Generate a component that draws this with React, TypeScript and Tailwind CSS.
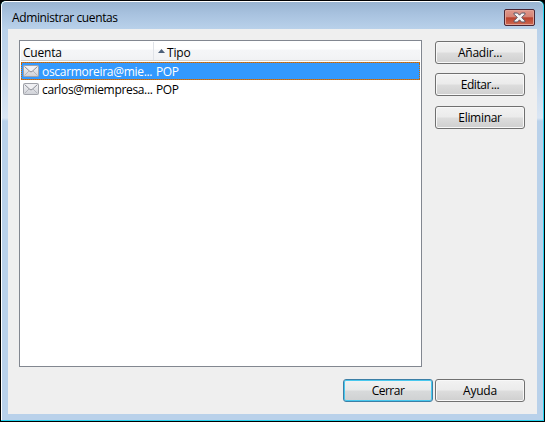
import React from 'react';

function Mail() {
  return (
    <svg width="16" height="12" viewBox="0 0 16 12" className="block shrink-0">
      <defs>
        <linearGradient id="paper" x1="0" y1="0" x2="0" y2="1">
          <stop offset="0" stopColor="#f4f4f6" />
          <stop offset="1" stopColor="#cfd1d7" />
        </linearGradient>
      </defs>
      <rect x=".5" y=".5" width="15" height="11" rx="1" fill="url(#paper)" stroke="#a0a2a9" />
      <path d="M1.5 10.5L6 6M14.5 10.5L10 6" fill="none" stroke="#b4b6bd" />
      <path d="M1.5 1.5L7 6.5Q8 7.3 9 6.5L14.5 1.5" fill="#f0f0f3" stroke="#8b8d95" />
    </svg>
  );
}

function Button({ label, primary = false, tracking }: { label: string; primary?: boolean; tracking: string }) {
  return (
    <button
      className={`block h-[23px] w-[90px] rounded-[3px] border text-center leading-[21px] ${tracking} ${
        primary
          ? 'border-[#3c7fa6] bg-[linear-gradient(#f1f2f2_0%,#e8eaea_48%,#d8dadb_52%,#cfd1d2_100%)] shadow-[inset_0_0_0_1px_#48c8ee]'
          : 'border-[#707070] bg-[linear-gradient(#f2f2f2_0%,#ebebeb_48%,#dddddd_52%,#cfcfcf_100%)] shadow-[inset_0_0_0_1px_#f8f8f8]'
      }`}
    >
      {label}
    </button>
  );
}

const focusLine = 'h-px bg-[repeating-linear-gradient(90deg,#cc6600_0px,#cc6600_1px,#a87c50_1px,#a87c50_2px)]';

function Row({ account, selected = false, tracking }: { account: string; selected?: boolean; tracking: string }) {
  return (
    <div className={`flex h-[18px] flex-col ${selected ? 'bg-[#3399ff] text-white' : ''}`}>
      <div className={selected ? focusLine : 'h-px'} />
      <div
        className={`flex h-[16px] items-center border-x border-dotted leading-[16px] ${
          selected ? 'border-[#cc6600]' : 'border-transparent'
        }`}
      >
        <div className="flex w-[134px] shrink-0 items-center pl-px">
          <Mail />
          <span className={`ml-[3px] whitespace-nowrap pt-[2px] ${tracking}`}>{account}</span>
        </div>
        <span className="pt-[2px] tracking-[-0.4px]">POP</span>
      </div>
      <div className={selected ? focusLine : 'h-px'} />
    </div>
  );
}

export default function App() {
  return (
    <div className="h-[422px] w-[545px] overflow-hidden bg-black font-['Open_Sans','Noto_Sans',sans-serif] text-[12px] text-black">
      <div className="h-full rounded-t-[6px] border border-black bg-[#27d3ef]">
        <div className="mr-px h-[419px] rounded-t-[5px] border-l border-t border-white bg-[linear-gradient(#99b4d1_0px,#a8c2df_12px,#b9d1ea_27px,#c3d7ec_65px,#dae6f4_116px,#b9d1ea_119px,#b9d1ea_100%)] px-[6px]">
          <header className="flex h-[27px] items-start justify-between pl-[4px] pr-[2px]">
            <h1 className="mt-[8px] text-[12px] leading-[16px] tracking-[-0.38px]">Administrar cuentas</h1>
            <button className="mt-[7px] flex h-[17px] w-[31px] items-center justify-center rounded-[2px] border border-[#4b2634] bg-[linear-gradient(#e0978b_0%,#d58476_46%,#b9412d_52%,#cf6a53_100%)] shadow-[inset_0_0_0_1px_#e1a397]">
              <svg width="13" height="11" viewBox="0 0 13 11">
                <path d="M1 1H4.5L6.5 3.2L8.5 1H12V2.2L8.7 5.5L12 8.8V10H8.5L6.5 7.8L4.5 10H1V8.8L4.3 5.5L1 2.2Z" fill="#f5f5f5" stroke="#5d5665" />
              </svg>
            </button>
          </header>
          <main className="h-[385px] w-[529px] bg-[#efefef] pl-[11px] pt-[11px]">
            <div className="flex">
              <section className="h-[327px] w-[403px] border border-[#828790] bg-white p-px">
                <div className="flex h-[19px] w-[399px] border-b border-[#d5d5d5] bg-[linear-gradient(#ffffff_0%,#ffffff_40%,#f5f6f8_44%,#f1f2f4_100%)] leading-[22px]">
                  <div className="w-[133px] border-r border-[#e0e3e8] pl-[2px] tracking-[-0.2px]">Cuenta</div>
                  <div className="flex pl-[4px]">
                    <svg width="7" height="4" viewBox="0 0 7 4" className="mr-[2px] mt-[7px]">
                      <path d="M0 4L3.5 0L7 4Z" fill="#4c607a" />
                    </svg>
                    <span className="tracking-[-0.2px]">Tipo</span>
                  </div>
                </div>
                <div className="pt-px">
                  <Row account="oscarmoreira@mie..." selected tracking="tracking-[-0.3px]" />
                  <Row account="carlos@miempresa..." tracking="tracking-[-0.33px]" />
                </div>
              </section>
              <aside className="ml-[13px] pt-px">
                <Button label="Añadir..." tracking="tracking-[-0.25px]" />
                <div className="mt-[9px]">
                  <Button label="Editar..." tracking="tracking-[-0.4px]" />
                </div>
                <div className="mt-[10px]">
                  <Button label="Eliminar" tracking="tracking-[-0.3px]" />
                </div>
              </aside>
            </div>
            <footer className="mt-[12px] flex gap-[2px] pl-[324px]">
              <Button label="Cerrar" primary tracking="tracking-[-0.5px]" />
              <Button label="Ayuda" tracking="tracking-[-0.2px]" />
            </footer>
          </main>
        </div>
      </div>
    </div>
  );
}
